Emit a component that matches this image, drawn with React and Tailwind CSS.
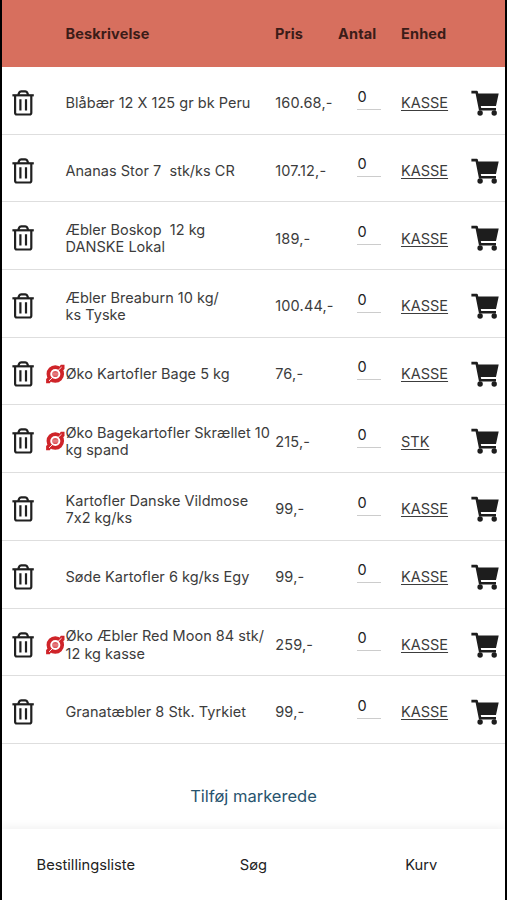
const PRODUCTS = [
  { name: ['Blåbær 12 X 125 gr bk Peru'], price: '160.68,-', unit: 'KASSE' },
  { name: ['Ananas Stor 7  stk/ks CR'], price: '107.12,-', unit: 'KASSE' },
  { name: ['Æbler Boskop  12 kg', 'DANSKE Lokal'], price: '189,-', unit: 'KASSE' },
  { name: ['Æbler Breaburn 10 kg/', 'ks Tyske'], price: '100.44,-', unit: 'KASSE' },
  { name: ['Øko Kartofler Bage 5 kg'], price: '76,-', unit: 'KASSE', organic: true },
  { name: ['Øko Bagekartofler Skrællet 10', 'kg spand'], price: '215,-', unit: 'STK', organic: true },
  { name: ['Kartofler Danske Vildmose', '7x2 kg/ks'], price: '99,-', unit: 'KASSE' },
  { name: ['Søde Kartofler 6 kg/ks Egy'], price: '99,-', unit: 'KASSE' },
  { name: ['Øko Æbler Red Moon 84 stk/', '12 kg kasse'], price: '259,-', unit: 'KASSE', organic: true },
  { name: ['Granatæbler 8 Stk. Tyrkiet'], price: '99,-', unit: 'KASSE' },
]

function TrashIcon() {
  return (
    <svg viewBox="0 0 22 26" className="h-[26px] w-[22px]" fill="none" stroke="#202020" strokeWidth="2.2" strokeLinejoin="round">
      <path d="M.4 5.3H21.8" />
      <path d="M3.1 5.5V22.8Q3.1 24.5 4.8 24.5H17.6Q19.3 24.5 19.3 22.8V5.5" />
      <path d="M6.2 5L7.2 2.6Q7.8 1.4 9.2 1.4H13.2Q14.6 1.4 15.2 2.6L16.2 5" />
      <path d="M8.4 9.2V20.6M14 9.2V20.6" />
    </svg>
  )
}

function CartIcon() {
  return (
    <svg viewBox="0 0 28 26" className="h-[26px] w-7" fill="#1d1d1d">
      <path d="M.4.7H5.8Q6.6.7 6.8 1.5L7.3 3.6H27.7L25 15.9H9.8L10.2 18H25V20.6H8L4.6 3.6H.4Z" />
      <circle cx="9.1" cy="23" r="2.7" />
      <circle cx="23.2" cy="23" r="2.7" />
    </svg>
  )
}

// Red Danish "Ø" organic mark
function OrganicIcon() {
  return (
    <svg viewBox="0 0 20 20" className="h-5 w-5" fill="none">
      <circle cx="9.3" cy="10" r="6.9" stroke="#cf2429" strokeWidth="3.7" />
      <path d="M13 3.4L14.8.8H18.5V5L15.9 7.4ZM5.6 16.6L3.8 19.2H.1V15L2.7 12.6Z" fill="#cf2429" />
      <path d="M11.6 6.9L15.6 3.1M7 13.1L3 16.9" stroke="#fff" strokeWidth=".9" />
      <circle cx="9.3" cy="10" r="3.1" fill="#dc5358" />
      <path d="M6.6 9.2H12M6.6 10.9H12" stroke="#f4b5b7" strokeWidth=".6" />
    </svg>
  )
}

function ProductRow({ product }) {
  return (
    <div className="grid h-[67.7px] grid-cols-[43.5px_20px_209.7px_82.3px_43.5px_70px_1fr] items-center border-b border-[#dedede] pt-[5.4px]">
      <button className="pl-2.5"><TrashIcon /></button>
      <span>{product.organic && <OrganicIcon />}</span>
      <div className="whitespace-pre leading-[17.6px] tracking-[0.02px]">
        {product.name.map((line) => <p key={line}>{line}</p>)}
      </div>
      <span className="tracking-[0.18px]">{product.price}</span>
      <span className="-mt-[9px] h-[22px] w-6 border-b border-[#cccccc] leading-[17px] text-[#222222]">0</span>
      <a className="underline underline-offset-2">{product.unit}</a>
      <button><CartIcon /></button>
    </div>
  )
}

export default function App() {
  return (
    <main className="flex h-[900px] w-[507px] flex-col overflow-hidden border-x-2 border-black bg-white font-['Inter',sans-serif] text-[14.5px] text-[#3c3c3c] [font-feature-settings:'calt'_0]">
      <header className="grid h-[67px] shrink-0 grid-cols-[63.5px_209.5px_63px_63px_1fr] items-center bg-[#d76f5e] pt-px font-bold tracking-[0.15px] text-[#3b1c18]">
        <span />
        <span>Beskrivelse</span>
        <span>Pris</span>
        <span>Antal</span>
        <span>Enhed</span>
      </header>

      <section className="shrink-0">
        {PRODUCTS.map((product) => <ProductRow key={product.name[0]} product={product} />)}
      </section>

      <div className="flex flex-1 items-center justify-center pt-[19px]">
        <button className="text-[16.5px] text-[#28546e]">Tilføj markerede</button>
      </div>

      <nav className="grid h-[71px] shrink-0 grid-cols-3 items-center pt-px text-center text-[14.7px] text-[#222222] shadow-[0_-3px_8px_rgba(0,0,0,0.05)]">
        <span>Bestillingsliste</span>
        <span>Søg</span>
        <span>Kurv</span>
      </nav>
    </main>
  )
}
